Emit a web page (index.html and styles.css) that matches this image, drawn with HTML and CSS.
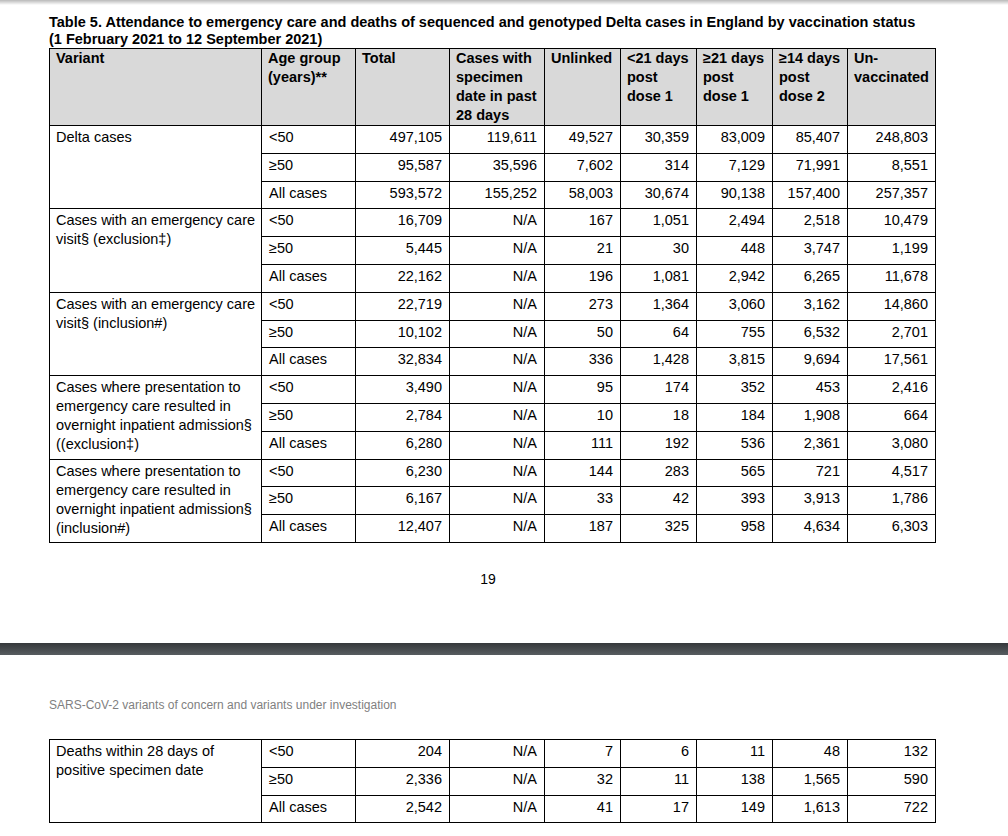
FILE: index.html
```html
<!DOCTYPE html>
<html lang="en">
<head>
<meta charset="utf-8">
<title>Table 5</title>
<link rel="stylesheet" href="styles.css">
</head>
<body>
<div class="shade"></div>
<section class="page page-one">
  <h2 class="title">Table 5. Attendance to emergency care and deaths of sequenced and genotyped Delta cases in England by vaccination status<br>(1 February 2021 to 12 September 2021)</h2>
  <table class="data">
    <colgroup>
      <col class="c-var"><col class="c-age"><col class="c-num"><col class="c-num2"><col class="c-s"><col class="c-s"><col class="c-s"><col class="c-s2"><col class="c-un">
    </colgroup>
    <thead>
      <tr>
        <th>Variant</th>
        <th>Age group<br>(years)**</th>
        <th>Total</th>
        <th>Cases with<br>specimen<br>date in past<br>28 days</th>
        <th>Unlinked</th>
        <th>&lt;21 days<br>post<br>dose 1</th>
        <th>≥21 days<br>post<br>dose 1</th>
        <th>≥14 days<br>post<br>dose 2</th>
        <th>Un-<br>vaccinated</th>
      </tr>
    </thead>
    <tbody>
      <tr><td class="var" rowspan="3">Delta cases</td><td>&lt;50</td><td class="n">497,105</td><td class="n">119,611</td><td class="n">49,527</td><td class="n">30,359</td><td class="n">83,009</td><td class="n">85,407</td><td class="n">248,803</td></tr>
      <tr><td>≥50</td><td class="n">95,587</td><td class="n">35,596</td><td class="n">7,602</td><td class="n">314</td><td class="n">7,129</td><td class="n">71,991</td><td class="n">8,551</td></tr>
      <tr><td>All cases</td><td class="n">593,572</td><td class="n">155,252</td><td class="n">58,003</td><td class="n">30,674</td><td class="n">90,138</td><td class="n">157,400</td><td class="n">257,357</td></tr>

      <tr><td class="var" rowspan="3">Cases with an emergency care<br>visit§ (exclusion‡)</td><td>&lt;50</td><td class="n">16,709</td><td class="n">N/A</td><td class="n">167</td><td class="n">1,051</td><td class="n">2,494</td><td class="n">2,518</td><td class="n">10,479</td></tr>
      <tr><td>≥50</td><td class="n">5,445</td><td class="n">N/A</td><td class="n">21</td><td class="n">30</td><td class="n">448</td><td class="n">3,747</td><td class="n">1,199</td></tr>
      <tr><td>All cases</td><td class="n">22,162</td><td class="n">N/A</td><td class="n">196</td><td class="n">1,081</td><td class="n">2,942</td><td class="n">6,265</td><td class="n">11,678</td></tr>

      <tr><td class="var" rowspan="3">Cases with an emergency care<br>visit§ (inclusion#)</td><td>&lt;50</td><td class="n">22,719</td><td class="n">N/A</td><td class="n">273</td><td class="n">1,364</td><td class="n">3,060</td><td class="n">3,162</td><td class="n">14,860</td></tr>
      <tr><td>≥50</td><td class="n">10,102</td><td class="n">N/A</td><td class="n">50</td><td class="n">64</td><td class="n">755</td><td class="n">6,532</td><td class="n">2,701</td></tr>
      <tr><td>All cases</td><td class="n">32,834</td><td class="n">N/A</td><td class="n">336</td><td class="n">1,428</td><td class="n">3,815</td><td class="n">9,694</td><td class="n">17,561</td></tr>

      <tr><td class="var" rowspan="3">Cases where presentation to<br>emergency care resulted in<br>overnight inpatient admission§<br>((exclusion‡)</td><td>&lt;50</td><td class="n">3,490</td><td class="n">N/A</td><td class="n">95</td><td class="n">174</td><td class="n">352</td><td class="n">453</td><td class="n">2,416</td></tr>
      <tr><td>≥50</td><td class="n">2,784</td><td class="n">N/A</td><td class="n">10</td><td class="n">18</td><td class="n">184</td><td class="n">1,908</td><td class="n">664</td></tr>
      <tr><td>All cases</td><td class="n">6,280</td><td class="n">N/A</td><td class="n">111</td><td class="n">192</td><td class="n">536</td><td class="n">2,361</td><td class="n">3,080</td></tr>

      <tr><td class="var" rowspan="3">Cases where presentation to<br>emergency care resulted in<br>overnight inpatient admission§<br>(inclusion#)</td><td>&lt;50</td><td class="n">6,230</td><td class="n">N/A</td><td class="n">144</td><td class="n">283</td><td class="n">565</td><td class="n">721</td><td class="n">4,517</td></tr>
      <tr><td>≥50</td><td class="n">6,167</td><td class="n">N/A</td><td class="n">33</td><td class="n">42</td><td class="n">393</td><td class="n">3,913</td><td class="n">1,786</td></tr>
      <tr><td>All cases</td><td class="n">12,407</td><td class="n">N/A</td><td class="n">187</td><td class="n">325</td><td class="n">958</td><td class="n">4,634</td><td class="n">6,303</td></tr>
    </tbody>
  </table>
  <div class="pagenum">19</div>
</section>
<div class="pagebreak"></div>
<section class="page page-two">
  <div class="running-head">SARS-CoV-2 variants of concern and variants under investigation</div>
  <table class="data">
    <colgroup>
      <col class="c-var"><col class="c-age"><col class="c-num"><col class="c-num2"><col class="c-s"><col class="c-s"><col class="c-s"><col class="c-s2"><col class="c-un">
    </colgroup>
    <tbody>
      <tr><td class="var" rowspan="3">Deaths within 28 days of<br>positive specimen date</td><td>&lt;50</td><td class="n">204</td><td class="n">N/A</td><td class="n">7</td><td class="n">6</td><td class="n">11</td><td class="n">48</td><td class="n">132</td></tr>
      <tr><td>≥50</td><td class="n">2,336</td><td class="n">N/A</td><td class="n">32</td><td class="n">11</td><td class="n">138</td><td class="n">1,565</td><td class="n">590</td></tr>
      <tr><td>All cases</td><td class="n">2,542</td><td class="n">N/A</td><td class="n">41</td><td class="n">17</td><td class="n">149</td><td class="n">1,613</td><td class="n">722</td></tr>
    </tbody>
  </table>
</section>
</body>
</html>
```

FILE: styles.css
```css
* { box-sizing: border-box; }

html, body {
  margin: 0;
  padding: 0;
  background: #ffffff;
  color: #000000;
  font-family: "Liberation Sans", Arial, sans-serif;
}

.shade {
  height: 5px;
  background: linear-gradient(#b9b9b9, #ffffff);
}

.page {
  padding-left: 49px;
}

.page-one {
  height: 638px;
  padding-top: 9px;
}

.title {
  margin: 0;
  font-size: 14.5px;
  line-height: 17px;
  font-weight: bold;
}

.data {
  border-collapse: collapse;
  table-layout: fixed;
  width: 886px;
  font-size: 14.5px;
}

.c-var { width: 212px; }
.c-age { width: 94px; }
.c-num { width: 94px; }
.c-num2 { width: 95px; }
.c-s { width: 76px; }
.c-s2 { width: 75px; }
.c-un { width: 88px; }

.data th,
.data td {
  border: 1px solid #000000;
  vertical-align: top;
  text-align: left;
  line-height: 19px;
}

.data th {
  background: #d9d9d9;
  font-weight: bold;
  padding: 0 4px 0 6px;
}

.data td {
  padding: 2px 7px 5.8px 7px;
}

.data td.var {
  padding: 2px 2px 4px 6px;
}

.data td.n {
  text-align: right;
}

.pagenum {
  width: 886px;
  padding-right: 8px;
  margin-top: 28px;
  text-align: center;
  font-size: 14px;
  line-height: 16px;
}

.pagebreak {
  height: 12px;
  background: linear-gradient(#35383b, #575c60);
}

.page-two {
  padding-top: 43px;
}

.running-head {
  font-size: 12px;
  line-height: 14px;
  color: #7f7f7f;
  margin-bottom: 27px;
}
```
